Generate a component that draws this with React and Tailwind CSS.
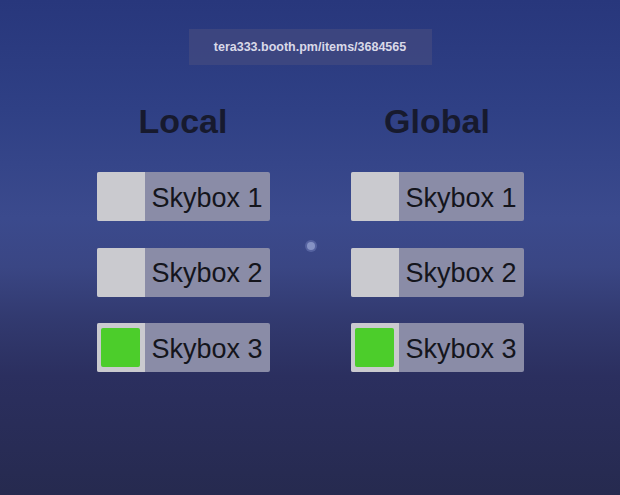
const COLUMNS = [
  { title: "Local", selected: 3 },
  { title: "Global", selected: 3 },
];

const SKYBOXES = [1, 2, 3];

function SkyboxToggle({ n, on }) {
  return (
    <button className="flex h-[49px] w-full overflow-hidden rounded-[2px] bg-[#8a8ca7] text-left">
      <span className="flex h-full w-[48px] shrink-0 items-center justify-center bg-[#cacacf]">
        {on && <span className="h-[39px] w-[39px] rounded-[2px] bg-[#4ccd2b]" />}
      </span>
      <span className="flex items-center pl-[7px] pt-[3px] text-[27px] leading-none text-[#14151c]">
        Skybox {n}
      </span>
    </button>
  );
}

export default function App() {
  return (
    <div
      className="relative flex h-[495px] w-[620px] flex-col items-center overflow-hidden bg-[linear-gradient(180deg,#28377c_0%,#2f4085_22%,#3b4a8d_44%,#3a4684_54%,#323a70_64%,#2b2f5f_76%,#262a4f_100%)] pt-[29px]"
      style={{ fontFamily: '"Liberation Sans", Arial, sans-serif' }}
    >
      {/* link banner */}
      <div className="flex h-[36px] w-[243px] items-center justify-center bg-[#3e4780]/90 text-[12.5px] font-bold text-[#d9d9e8]">
        tera333.booth.pm/items/3684565
      </div>

      <div className="mt-[39px] grid grid-cols-[173px_173px] gap-x-[81px]">
        {COLUMNS.map((col) => (
          <div key={col.title} className="flex flex-col items-center">
            <h2 className="h-[34px] text-[34px] font-bold leading-none text-[#171a2e]">
              {col.title}
            </h2>
            <div className="mt-[34px] flex w-full flex-col gap-[26.5px]">
              {SKYBOXES.map((n) => (
                <SkyboxToggle key={n} n={n} on={n === col.selected} />
              ))}
            </div>
          </div>
        ))}
      </div>

      {/* gaze cursor */}
      <div className="absolute left-[305px] top-[240px] h-[12px] w-[12px] rounded-full bg-[#5562a0] p-[2px]">
        <div className="h-full w-full rounded-full bg-[#8592c4]" />
      </div>
    </div>
  );
}
